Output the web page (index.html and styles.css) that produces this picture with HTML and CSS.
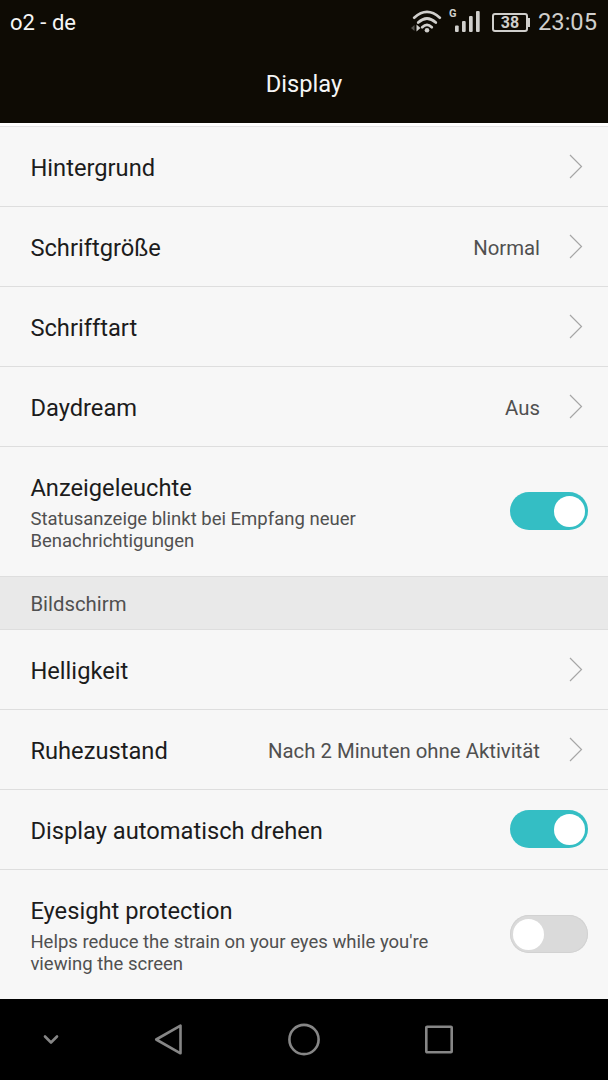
FILE: index.html
```html
<!DOCTYPE html>
<html lang="de">
<head>
  <meta charset="UTF-8">
  <title>Display</title>
  <meta name="viewport" content="width=device-width, initial-scale=1.0" />
  <link rel="stylesheet" href="styles.css">
</head>
<body>

  <header>
    <div class="status-bar">
      <span class="carrier">o2 - de</span>
      <svg class="signals" width="72" height="28" viewBox="0 0 72 28">
        <g fill="none" stroke="#d0cfcc" stroke-width="2.7" stroke-linecap="round">
          <path d="M4.2 9.7 Q17 -1.9 29.8 9.7" />
          <path d="M8.2 14.6 Q17 6.4 25.8 14.6" />
          <path d="M12.2 19.2 Q17 14.6 21.8 19.2" />
        </g>
        <circle cx="17" cy="22.3" r="2.3" fill="#d0cfcc" />
        <path d="M4.5 17 L1 20 L4.5 23 Z" fill="#56544f" />
        <path d="M6.5 16.5 L10.5 20 L6.5 23.5 Z" fill="#d0cfcc" />
        <text x="39" y="8.5">G</text>
        <g fill="#d0cfcc">
          <rect x="45" y="17.5" width="3.7" height="6.5" rx="1" />
          <rect x="52" y="13" width="3.7" height="11" rx="1" />
          <rect x="59" y="8" width="3.7" height="16" rx="1" />
          <rect x="66" y="3" width="3.7" height="21" rx="1" />
        </g>
      </svg>
      <span class="battery">38</span>
      <span class="clock">23:05</span>
    </div>
    <h1>Display</h1>
  </header>

  <main>
    <div class="row">
      <span class="label">Hintergrund</span>
      <svg class="arrow" viewBox="0 0 14 26"><path d="M1 2 L12.5 13.5 L1 25" /></svg>
    </div>
    <div class="row">
      <span class="label">Schriftgröße</span>
      <span class="value">Normal</span>
      <svg class="arrow" viewBox="0 0 14 26"><path d="M1 2 L12.5 13.5 L1 25" /></svg>
    </div>
    <div class="row">
      <span class="label">Schrifftart</span>
      <svg class="arrow" viewBox="0 0 14 26"><path d="M1 2 L12.5 13.5 L1 25" /></svg>
    </div>
    <div class="row">
      <span class="label">Daydream</span>
      <span class="value">Aus</span>
      <svg class="arrow" viewBox="0 0 14 26"><path d="M1 2 L12.5 13.5 L1 25" /></svg>
    </div>
    <div class="row tall">
      <div class="text">
        <span class="label">Anzeigeleuchte</span>
        <p>Statusanzeige blinkt bei Empfang neuer<br>Benachrichtigungen</p>
      </div>
      <span class="switch on"></span>
    </div>

    <h2>Bildschirm</h2>

    <div class="row">
      <span class="label">Helligkeit</span>
      <svg class="arrow" viewBox="0 0 14 26"><path d="M1 2 L12.5 13.5 L1 25" /></svg>
    </div>
    <div class="row">
      <span class="label">Ruhezustand</span>
      <span class="value">Nach 2 Minuten ohne Aktivität</span>
      <svg class="arrow" viewBox="0 0 14 26"><path d="M1 2 L12.5 13.5 L1 25" /></svg>
    </div>
    <div class="row">
      <span class="label">Display automatisch drehen</span>
      <span class="switch on"></span>
    </div>
    <div class="row tall">
      <div class="text">
        <span class="label">Eyesight protection</span>
        <p>Helps reduce the strain on your eyes while you're<br>viewing the screen</p>
      </div>
      <span class="switch"></span>
    </div>
  </main>

  <nav>
    <svg class="hide" width="18" height="12" viewBox="0 0 18 12"><path d="M3 2.5 L9 8.5 L15 2.5" /></svg>
    <svg class="back" width="32" height="34" viewBox="0 0 32 34"><path d="M27.5 2.7 V30.3 L3.2 16.5 Z" /></svg>
    <svg class="home" width="34" height="34" viewBox="0 0 34 34"><circle cx="17" cy="16.5" r="14.6" /></svg>
    <svg class="recent" width="30" height="30" viewBox="0 0 30 30"><rect x="2.3" y="1.8" width="25.4" height="25.4" rx="0.8" /></svg>
  </nav>

</body>
</html>
```

FILE: styles.css
```css
body {
  font-family: Roboto, sans-serif;
  background: #f7f7f7;
  margin: 0;
  height: 1080px;
  display: flex;
  flex-direction: column;
  overflow: hidden;
}

header {
  background: #0e0b04;
  height: 123px;
  color: #f5f5f5;
}

.status-bar {
  display: flex;
  align-items: center;
  height: 44px;
  padding: 0 11px 0 10px;
  box-sizing: border-box;
}

.carrier {
  font-size: 22px;
  margin-right: auto;
}

.signals text {
  font-size: 11px;
  font-weight: bold;
  fill: #d0cfcc;
}

.battery {
  position: relative;
  box-sizing: border-box;
  width: 36px;
  height: 19px;
  margin-left: 10px;
  border: 2px solid #d0cfcc;
  border-radius: 3px;
  color: #d0cfcc;
  font-size: 16px;
  font-weight: bold;
  line-height: 15px;
  text-align: center;
}

.battery::after {
  content: "";
  position: absolute;
  right: -4px;
  top: 3px;
  width: 2px;
  height: 9px;
  background: #d0cfcc;
}

.clock {
  margin-left: 10px;
  font-size: 23.7px;
  color: #d0cfcc;
}

h1 {
  margin: 0;
  font-size: 23.7px;
  font-weight: 400;
  line-height: 80px;
  text-align: center;
}

main {
  height: 872px;
  border-top: 3px solid #fff;
  box-shadow: inset 0 1px #e4e4e6;
  padding-top: 1px;
}

.row {
  display: flex;
  align-items: center;
  box-sizing: border-box;
  height: 80px;
  padding: 0 20px 0 30.4px;
  border-bottom: 1px solid #dedede;
}

.tall {
  height: 130px;
}

.row:last-child {
  height: 128px;
  border-bottom: none;
}

.label {
  display: block;
  font-size: 23.7px;
  line-height: 28px;
  color: #1c1c1c;
  padding-top: 3px;
}

.value {
  margin-left: auto;
  padding-top: 2px;
  font-size: 20.35px;
  color: #505050;
}

.arrow {
  width: 14px;
  height: 26px;
  margin: 0 5px 1px auto;
  fill: none;
  stroke: #a6a6a6;
  stroke-width: 1.2;
}

.value + .arrow {
  margin-left: 29px;
}

.row p {
  margin: 6px 0 0;
  font-size: 18.5px;
  line-height: 22px;
  color: #505050;
}

.switch {
  position: relative;
  width: 78px;
  height: 38px;
  margin: 0 0 1px auto;
  border-radius: 19px;
  background: #dadada;
  box-shadow: inset 0 0 0 1px #d2d2d2;
}

.switch::after {
  content: "";
  position: absolute;
  left: 3px;
  top: 4px;
  width: 31px;
  height: 31px;
  border-radius: 50%;
  background: #fff;
}

.switch.on {
  background: #34bec4;
  box-shadow: none;
}

.switch.on::after {
  left: 44px;
}

h2 {
  margin: 0;
  box-sizing: border-box;
  height: 53px;
  padding-left: 30.4px;
  border-bottom: 1px solid #dedede;
  background: #e9e9e9;
  font-size: 20.35px;
  font-weight: 400;
  line-height: 54px;
  color: #505050;
}

nav {
  display: flex;
  align-items: center;
  height: 81px;
  background: #000;
}

nav svg {
  fill: none;
  stroke: #868686;
  stroke-width: 2.6;
  stroke-linecap: round;
  stroke-linejoin: round;
}

.hide {
  margin-left: 42px;
}

.back {
  margin-left: 93px;
}

.home {
  margin-left: 102px;
}

.recent {
  margin-left: 103px;
}
```
